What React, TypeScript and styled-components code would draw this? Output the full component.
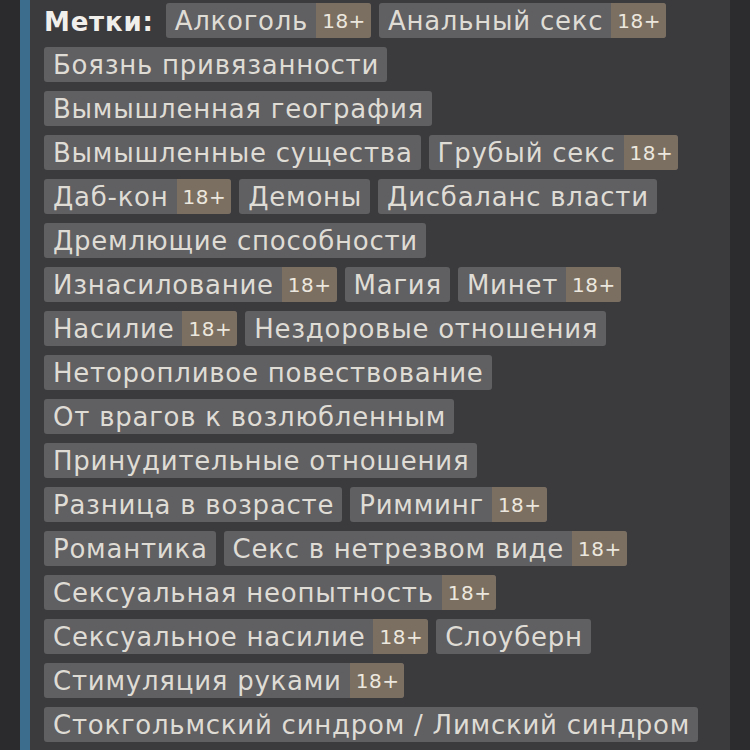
import React from 'react';
import styled, { createGlobalStyle } from 'styled-components';

const GlobalStyle = createGlobalStyle`
  html, body {
    margin: 0;
    padding: 0;
    background: #2b2a2d;
    overflow: hidden;
  }
`;

type TagItem = { name: string; adult?: boolean };

const tags: TagItem[] = [
  { name: 'Алкоголь', adult: true },
  { name: 'Анальный секс', adult: true },
  { name: 'Боязнь привязанности' },
  { name: 'Вымышленная география' },
  { name: 'Вымышленные существа' },
  { name: 'Грубый секс', adult: true },
  { name: 'Даб-кон', adult: true },
  { name: 'Демоны' },
  { name: 'Дисбаланс власти' },
  { name: 'Дремлющие способности' },
  { name: 'Изнасилование', adult: true },
  { name: 'Магия' },
  { name: 'Минет', adult: true },
  { name: 'Насилие', adult: true },
  { name: 'Нездоровые отношения' },
  { name: 'Неторопливое повествование' },
  { name: 'От врагов к возлюбленным' },
  { name: 'Принудительные отношения' },
  { name: 'Разница в возрасте' },
  { name: 'Римминг', adult: true },
  { name: 'Романтика' },
  { name: 'Секс в нетрезвом виде', adult: true },
  { name: 'Сексуальная неопытность', adult: true },
  { name: 'Сексуальное насилие', adult: true },
  { name: 'Слоуберн' },
  { name: 'Стимуляция руками', adult: true },
  { name: 'Стокгольмский синдром / Лимский синдром' },
];

const Page = styled.div`
  display: flex;
  height: 750px;
  background: #2c2c2e;
`;

const Gutter = styled.div`
  width: 20px;
  flex-shrink: 0;
  background: #2b2a2d;
`;

const Panel = styled.div`
  width: 710px;
  flex-shrink: 0;
  background: #3b3a3d;
  border-left: 10px solid #3c6d8c;
  padding: 3px 25px 0 14px;
  box-sizing: border-box;
  font-family: 'DejaVu Sans', Verdana, sans-serif;
`;

const TagList = styled.div`
  display: flex;
  flex-wrap: wrap;
  align-items: center;
  gap: 9px 8px;
`;

const Label = styled.span`
  font-weight: bold;
  font-size: 26px;
  letter-spacing: 0.8px;
  color: #f1efec;
  margin-right: 4px;
  padding-top: 3px;
`;

const Tag = styled.span`
  display: inline-flex;
  align-items: stretch;
  height: 35px;
  border-radius: 3px;
  overflow: hidden;
  background: #605f62;
  color: #dfdcd5;
  font-size: 26px;
  letter-spacing: 0.75px;
  white-space: nowrap;
`;

const TagName = styled.span`
  padding: 2px 8px 0 9px;
  line-height: 33px;
`;

const Adult = styled.span`
  background: #7b6f61;
  color: #ece7de;
  font-size: 20px;
  letter-spacing: 0.5px;
  line-height: 33px;
  padding: 2px 5px 0 6px;
`;

export default function App() {
  return (
    <>
      <GlobalStyle />
      <Page>
        <Gutter />
        <Panel>
          <TagList>
            <Label>Метки:</Label>
            {tags.map((t) => (
              <Tag key={t.name}>
                <TagName>{t.name}</TagName>
                {t.adult && <Adult>18+</Adult>}
              </Tag>
            ))}
          </TagList>
        </Panel>
      </Page>
    </>
  );
}
